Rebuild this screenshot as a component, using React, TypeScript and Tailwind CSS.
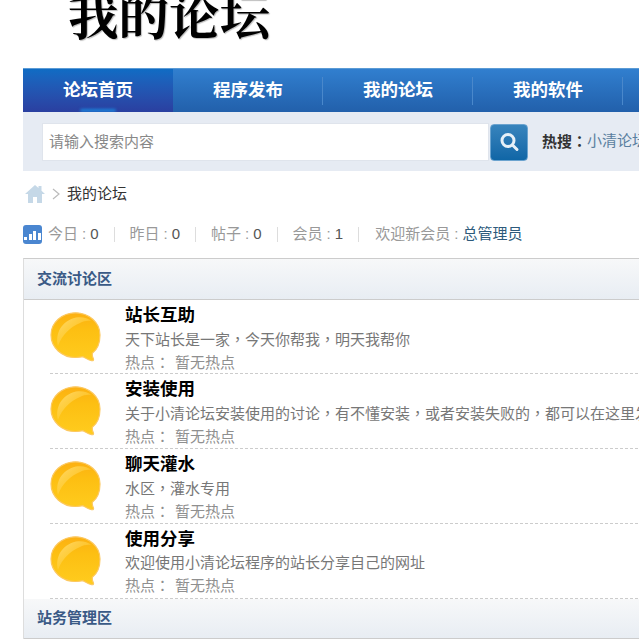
const sans = "font-['Liberation_Sans','Noto_Sans_CJK_SC',sans-serif]";

function T({ children }: { children: string }) {
  return (
    <>
      {children.split(/([，：])/).map((p, i) =>
        p === "，" || p === "：" ? (
          <span key={i} lang="zh-Hant" className="font-['Noto_Sans_CJK_TC',sans-serif]">
            {p}
          </span>
        ) : (
          p
        ),
      )}
    </>
  );
}

function Bubble() {
  return (
    <svg width="52" height="52" viewBox="0 0 52 52" className="shrink-0 mt-[12px]">
      <defs>
        <linearGradient id="bub" x1="0" y1="0" x2="0" y2="1">
          <stop offset="0" stopColor="#fcb012" />
          <stop offset="0.35" stopColor="#fdbf12" />
          <stop offset="1" stopColor="#ffcc1e" />
        </linearGradient>
        <linearGradient id="shine" x1="0" y1="0" x2="1" y2="1">
          <stop offset="0" stopColor="#ffdb70" stopOpacity="1" />
          <stop offset="1" stopColor="#ffc920" stopOpacity="0.15" />
        </linearGradient>
      </defs>
      <path
        d="M25.500 .8C12 .8 1 10.500 1 23c0 12.500 11 22.500 24.500 22.500 3 0 5.500-.3 7.500-.8 2.500 1.300 5.500 3.300 8.500 4 1.800.3 2.500-.7 1.800-2.200-.7-1.500-1.300-3-1-5.200C48 37 50 30.500 50 23 50 10.500 39 .8 25.500 .8Z"
        fill="url(#bub)"
        stroke="#fcc860"
        strokeWidth="1.200"
      />
      <path d="M8 34C5 22 11 9 26 5.500c6-1 12 .5 15.500 3.500-4-.5-8 0-11.500 2C20 15 12 23 8 34Z" fill="url(#shine)" />
    </svg>
  );
}

const forums = [
  { t: "站长互助", d: "天下站长是一家，今天你帮我，明天我帮你" },
  { t: "安装使用", d: "关于小清论坛安装使用的讨论，有不懂安装，或者安装失败的，都可以在这里发帖求助" },
  { t: "聊天灌水", d: "水区，灌水专用" },
  { t: "使用分享", d: "欢迎使用小清论坛程序的站长分享自己的网址" },
];

const nav = ["论坛首页", "程序发布", "我的论坛", "我的软件", "关于"];

const stats = [
  ["今日", "0"],
  ["昨日", "0"],
  ["帖子", "0"],
  ["会员", "1"],
];

function SectionHead({ title, className }: { title: string; className: string }) {
  return (
    <div className={`flex items-center pl-[13px] bg-gradient-to-b from-[#f7f8f9] to-[#e8edf3] border-b border-[#ccc] ${className}`}>
      <span className="text-[15px] font-bold text-[#3a5a86] whitespace-nowrap">{title}</span>
    </div>
  );
}

export default function App() {
  return (
    <div className={`w-[639px] h-[639px] overflow-hidden bg-white ${sans}`}>
      <div className="h-[68px] pl-[68px] overflow-hidden">
        <div className="mt-[-17px] text-[50.500px] leading-[60px] font-bold text-black whitespace-nowrap font-['Noto_Serif_CJK_SC','Liberation_Serif',serif] [text-shadow:1px_1px_1px_#bbb]">
          我的论坛
        </div>
      </div>
      <div className="ml-[23px] w-[1000px]">
        <div className="flex h-[44px] bg-gradient-to-b from-[#317fcf] to-[#2260ab] border-t border-[#5b9bd5]">
          {nav.map((n, i) => (
            <div
              key={n}
              className={`relative w-[150px] flex items-center justify-center ${i === 0 ? "bg-gradient-to-b from-[#0f6cc4] to-[#2a3fa0]" : ""}`}
            >
              {i > 1 && <span className="absolute left-[-1px] top-[8px] bottom-[7px] w-px bg-[#4a88cb]" />}
              <span className="text-[17.500px] font-bold text-white">{n}</span>
              {i === 0 && (
                <span className="absolute inset-x-0 bottom-0 h-[6px] overflow-hidden">
                  <span className="block mx-auto mt-[3px] w-[36px] h-[3px] rounded-full bg-[#1a86dc] blur-[1.500px]" />
                </span>
              )}
            </div>
          ))}
        </div>
        <div className="flex items-center h-[59px] bg-[#e6ebf3] pl-[19px]">
          <div className="flex items-center w-[447px] h-[38px] bg-white border border-[#dfe4ec] pl-[6px] text-[15px] text-[#888]">
            <span className="pt-[1px]">请输入搜索内容</span>
          </div>
          <div className="ml-[1px] mt-[1px] flex items-center justify-center w-[38px] h-[37px] rounded-[4px] border border-[#6ba3cf] bg-gradient-to-b from-[#3784bd] to-[#0f66a6]">
            <svg width="22" height="22" viewBox="0 0 22 22" fill="none">
              <circle cx="10" cy="9.500" r="6" stroke="#e6f0f8" strokeWidth="3" />
              <path d="M14.500 14l4.500 4.500" stroke="#e6f0f8" strokeWidth="3" strokeLinecap="round" />
            </svg>
          </div>
          <span className="ml-[14px] text-[15px] whitespace-nowrap font-bold text-[#333]">
            <T>热搜：</T>
          </span>
          <span className="text-[15px] whitespace-nowrap text-[#5a7fa0]">小清论坛</span>
        </div>
        <div className="flex items-center h-[46px] pl-[2px] text-[15px] text-[#333]">
          <svg width="20" height="18" viewBox="0 0 20 18" fill="#c5d8e7">
            <path d="M10 0 0 9h3v9h5v-6h4v6h5V9h3l-3.500-3.200V1h-3v2.100Z" />
          </svg>
          <svg width="10" height="14" viewBox="0 0 10 14" fill="none" className="ml-[6px] mr-[6px]">
            <path d="M2 2l6 5-6 5" stroke="#bbb" strokeWidth="1.200" />
          </svg>
          <span>我的论坛</span>
        </div>
        <div className="flex items-center h-[34px] text-[15px] text-[#999]">
          <div className="flex items-end justify-center gap-[1.500px] w-[19px] h-[19px] rounded-[3px] bg-[#4a86d0] pb-[4px] mr-[6px]">
            <span className="w-[3px] h-[3px] bg-white" />
            <span className="w-[3px] h-[6px] bg-white" />
            <span className="w-[3px] h-[9px] bg-white" />
            <span className="w-[3px] h-[7px] bg-white" />
          </div>
          {stats.map(([l, v]) => (
            <div key={l} className="flex items-center whitespace-nowrap">
              <span>{l}</span>
              <span className="mx-[4px]">:</span>
              <span className="text-[#555]">{v}</span>
              <span className="mx-[15px] w-px h-[15px] bg-[#ddd]" />
            </div>
          ))}
          <span className="ml-[1px] whitespace-nowrap">欢迎新会员 :</span>
          <span className="ml-[4px] whitespace-nowrap text-[#2d5a7b]">总管理员</span>
        </div>
        <div className="mt-[7px] border-l border-t border-l-[#ddd] border-t-[#ccc]">
          <SectionHead title="交流讨论区" className="h-[41px]" />
          {forums.map((f, i) => (
            <div key={f.t} className={`ml-[26px] border-b border-dashed border-[#ccc] flex items-start ${i === 0 ? "h-[74px]" : "h-[75px]"}`}>
              <Bubble />
              <div className="ml-[23px] pt-[3px] flex flex-col">
                <div className="text-[17.500px] leading-[24px] font-bold text-black">{f.t}</div>
                <div className="text-[15px] leading-[24px] text-[#777] whitespace-nowrap">
                  <T>{f.d}</T>
                </div>
                <div className="text-[15px] leading-[20px] text-[#8f8f8f] whitespace-nowrap">
                  <T>热点：</T>
                  <span className="ml-[5px]">暂无热点</span>
                </div>
              </div>
            </div>
          ))}
          <SectionHead title="站务管理区" className="h-[40px]" />
        </div>
      </div>
    </div>
  );
}
